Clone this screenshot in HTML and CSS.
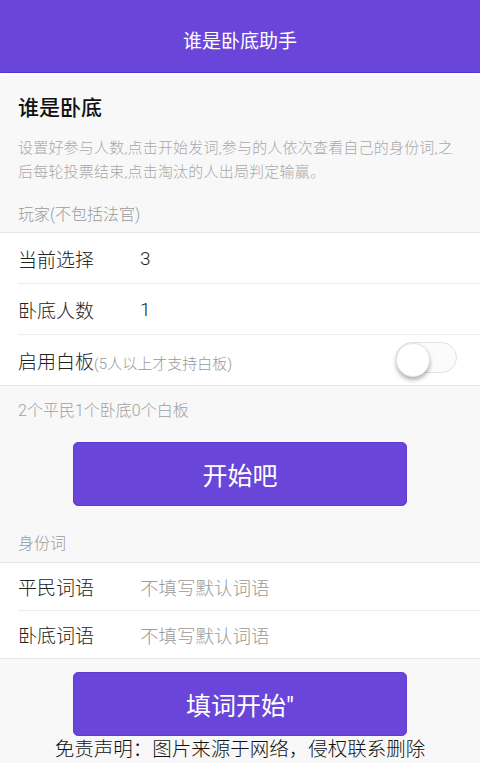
FILE: index.html
```html
<!DOCTYPE html>
<html lang="zh-CN">
<head>
<meta charset="utf-8">
<title>谁是卧底助手</title>
<link rel="stylesheet" href="styles.css">
</head>
<body>
<header class="topbar">谁是卧底助手</header>
<main class="page">
  <section class="intro">
    <h1 class="intro-title">谁是卧底</h1>
    <p class="intro-desc">设置好参与人数,点击开始发词,参与的人依次查看自己的身份词,之后每轮投票结束,点击淘汰的人出局判定输赢。</p>
  </section>

  <div class="section-label">玩家(不包括法官)</div>
  <ul class="list">
    <li class="row"><span class="row-label">当前选择</span><span class="row-value">3</span></li>
    <li class="row"><span class="row-label">卧底人数</span><span class="row-value">1</span></li>
    <li class="row row-last row-toggle">
      <span class="row-label">启用白板<small class="hint">(5人以上才支持白板)</small></span>
      <span class="switch"><span class="knob"></span></span>
    </li>
  </ul>
  <div class="summary">2个平民1个卧底0个白板</div>
  <button class="btn btn-start">开始吧</button>

  <div class="section-label section-label-words">身份词</div>
  <ul class="list list-words">
    <li class="row row-word"><span class="row-label">平民词语</span><span class="row-placeholder">不填写默认词语</span></li>
    <li class="row row-word row-last"><span class="row-label">卧底词语</span><span class="row-placeholder">不填写默认词语</span></li>
  </ul>
  <button class="btn btn-fill">填词开始"</button>
  <p class="disclaimer">免责声明：图片来源于网络，侵权联系删除</p>
</main>
</body>
</html>
```

FILE: styles.css
```css
* {
  box-sizing: border-box;
}

html, body {
  margin: 0;
  padding: 0;
}

body {
  background: #f8f8f8;
  font-family: Roboto, "Noto Sans CJK SC", "Noto Sans", sans-serif;
  font-weight: 300;
  color: #222;
  width: 480px;
  height: 763px;
  overflow: hidden;
}

.topbar {
  height: 73px;
  padding-top: 6px;
  background: #6a45da;
  border-bottom: 1px solid #5a2fdc;
  color: #fff;
  font-size: 19px;
  font-weight: 400;
  display: flex;
  align-items: center;
  justify-content: center;
  box-shadow: 0 2px 3px rgba(255, 255, 255, 0.9);
}

.page {
  display: flex;
  flex-direction: column;
}

.intro {
  padding: 0 18px;
}

.intro-title {
  margin: 20px 0 0;
  font-size: 21px;
  line-height: 30px;
  font-weight: 500;
  color: #111;
}

.intro-desc {
  margin: 13px 0 0;
  font-size: 15px;
  line-height: 24px;
  letter-spacing: 0.2px;
  color: #a8a8a8;
}

.section-label {
  padding: 19px 18px 5px;
  font-size: 16px;
  line-height: 24px;
  color: #9a9a9a;
}

.section-label-words {
  padding-top: 26px;
  padding-bottom: 6px;
}

.list {
  list-style: none;
  margin: 0;
  padding: 0 0 0 18px;
  background: #fff;
  border-top: 1px solid #e6e6e6;
  border-bottom: 1px solid #e6e6e6;
}

.row {
  height: 51px;
  display: flex;
  align-items: center;
  border-bottom: 1px solid #ececec;
  font-size: 19px;
}

.row-last {
  border-bottom: none;
  height: 50px;
}

.row-word {
  height: 48px;
}

.row-word.row-last {
  height: 47px;
}

.row-label {
  width: 122px;
  flex: none;
  color: #222;
  white-space: nowrap;
}

.row-value {
  color: #222;
}

.row-placeholder {
  color: #999;
  font-size: 18.5px;
}

.hint {
  font-size: 15px;
  color: #999;
}

.row-toggle .row-label {
  flex: 1;
}

.switch {
  position: relative;
  width: 61px;
  height: 31px;
  margin: -5px 23px 0 0;
  border: 1px solid #e2e2e2;
  border-radius: 16px;
  background: #fbfbfb;
  flex: none;
}

.knob {
  position: absolute;
  left: -1px;
  top: 0;
  width: 34px;
  height: 34px;
  border-radius: 50%;
  background: #fff;
  border: 1px solid #e4e4e4;
  box-shadow: 0 3px 4px rgba(0, 0, 0, 0.3);
}

.summary {
  margin-top: 13px;
  padding: 0 18px;
  font-size: 16px;
  line-height: 24px;
  color: #a0a0a0;
}

.btn {
  display: flex;
  align-items: center;
  justify-content: center;
  align-self: center;
  width: 334px;
  height: 64px;
  margin: 0;
  padding: 0;
  border: 1px solid #5f3bd6;
  border-radius: 5px;
  background: #6a45da;
  color: #fff;
  font-family: Roboto, "Noto Sans CJK SC", "Noto Sans", sans-serif;
  font-weight: 400;
  font-size: 25px;
}

.btn-start {
  margin-top: 19px;
}

.btn-fill {
  margin-top: 13px;
}

.disclaimer {
  margin: 0;
  text-align: center;
  font-size: 19.5px;
  line-height: 27px;
  font-weight: 300;
  color: #111;
}
```
